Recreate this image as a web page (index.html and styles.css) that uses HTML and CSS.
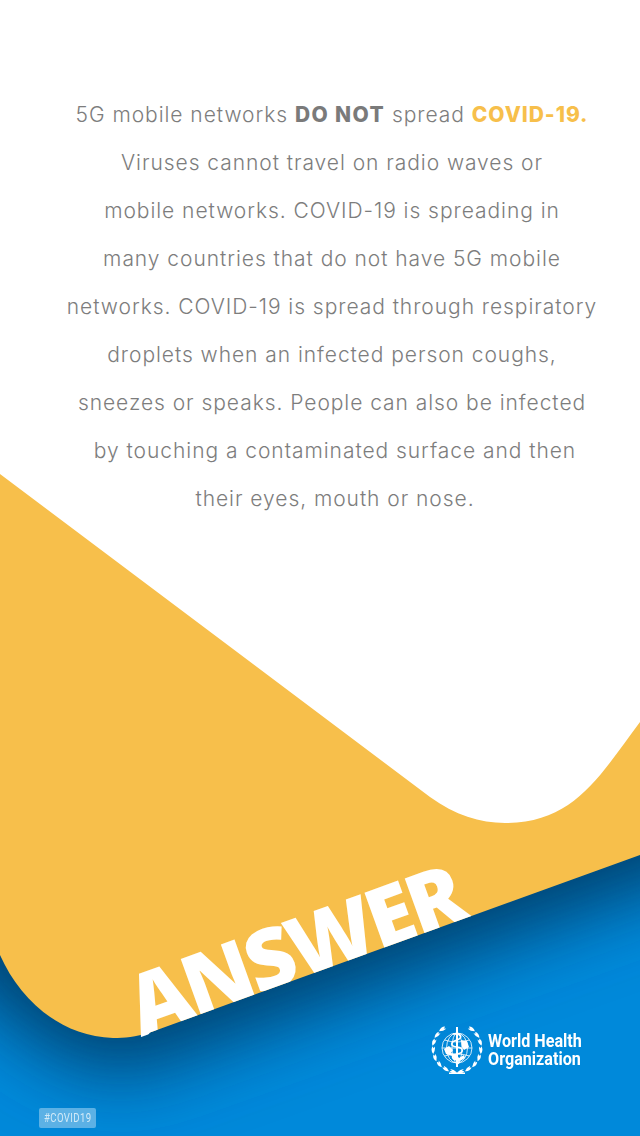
FILE: index.html
```html
<!DOCTYPE html>
<html lang="en">
<head>
<meta charset="utf-8">
<title>5G mobile networks do not spread COVID-19</title>
<link rel="stylesheet" href="styles.css">
</head>
<body>
<main class="page">
  <svg class="backdrop" viewBox="0 0 640 1136" width="640" height="1136" aria-hidden="true">
    <defs>
      <filter id="soft" x="-20%" y="-40%" width="140%" height="180%">
        <feGaussianBlur stdDeviation="38"/>
      </filter>
      <clipPath id="seaClip"><path d="M0 940L120 1025L660 840V1136H0Z"/></clipPath>
      <clipPath id="sunClip"><path d="M100 800H640V855L150 1032.500L130 1060H100Z"/></clipPath>
    </defs>
    <rect class="sky" width="640" height="1136"/>
    <rect class="sea" x="0" y="850" width="640" height="286"/>
    <g clip-path="url(#seaClip)">
      <path class="shade" filter="url(#soft)" d="M-60 960C20 1030 60 1072 130 1074L720 864V700H-60Z"/>
    </g>
    <path class="sun" d="M0 474L430 797C455 815 480 823 505 823C575 823 600 775 640 722V855L150 1032.500C135 1037 125 1038 113 1038C60 1036 20 1000 0 955Z"/>
    <g clip-path="url(#sunClip)">
      <text class="answer" transform="translate(141 1037) rotate(-19.8)">ANSWER</text>
    </g>
  </svg>

  <section class="message">
    <p class="line">5G mobile networks <b class="strong">DO NOT</b> spread <b class="accent">COVID-19.</b></p>
    <p class="line">Viruses cannot travel on radio waves or</p>
    <p class="line">mobile networks. COVID-19 is spreading in</p>
    <p class="line">many countries that do not have 5G mobile</p>
    <p class="line">networks. COVID-19 is spread through respiratory</p>
    <p class="line">droplets when an infected person coughs,</p>
    <p class="line">sneezes or speaks. People can also be infected</p>
    <p class="line line-shift">by touching a contaminated surface and then</p>
    <p class="line line-shift">their eyes, mouth or nose.</p>
  </section>

  <footer class="foot">
    <div class="who">
      <svg class="emblem" viewBox="0 0 52 50" width="52" height="50" aria-hidden="true">
        <defs>
          <g id="leaves">
            <path id="leafpair" d="M26 47.500q-3.800-2.800-7.500-1.200q3.200 3.200 7.500 1.200zM26 47.500q-3.200-3.200-6.800-3.400q2.600 3.800 6.800 3.400z"/>
            <use href="#leafpair" transform="rotate(19 26 23)"/>
            <use href="#leafpair" transform="rotate(38 26 23)"/>
            <use href="#leafpair" transform="rotate(57 26 23)"/>
            <use href="#leafpair" transform="rotate(76 26 23)"/>
            <use href="#leafpair" transform="rotate(95 26 23)"/>
            <use href="#leafpair" transform="rotate(114 26 23)"/>
            <use href="#leafpair" transform="rotate(133 26 23)"/>
          </g>
        </defs>
        <g class="globe">
          <circle cx="26" cy="23" r="15"/>
          <ellipse cx="26" cy="23" rx="10.500" ry="15"/>
          <ellipse cx="26" cy="23" rx="5" ry="15"/>
          <path d="M11 23H41M13.500 15Q26 19 38.500 15M13.500 31Q26 27 38.500 31"/>
        </g>
        <path class="land" d="M13 24L18 21L22 25L20 28L25 29L28 33L33 30L34 33L29 36L24 35L21 31L15 29Z"/>
        <path class="land" d="M30 15L36 16L38 22L33 25L31 22Z"/>
        <path class="staff" d="M25 2H27V42H25Z"/>
        <path class="snake" d="M22 9C31 8 32 13 26 15C19 17 19 21 26 22C33 23 33 28 26 29C20 30 20 34 26 35C29 36 29 38 26 39"/>
        <use class="leaf" href="#leaves"/>
        <use class="leaf" href="#leaves" transform="translate(52 0) scale(-1 1)"/>
        <path class="leaf" d="M18 47.500H34V49H18Z"/>
      </svg>
      <p class="who-name">World Health<br>Organization</p>
    </div>
    <span class="tag"><span class="tag-text">#COVID19</span></span>
  </footer>
</main>
</body>
</html>
```
FILE: styles.css
```css
* { box-sizing: border-box; }
html, body { margin: 0; padding: 0; }
body { width: 640px; height: 1136px; overflow: hidden; background: #fff; }

.page {
  position: relative;
  width: 640px;
  height: 1136px;
  display: flex;
  flex-direction: column;
  justify-content: space-between;
  overflow: hidden;
}

.backdrop { position: absolute; inset: 0; display: block; }
.sky { fill: #fff; }
.sea { fill: #0089da; }
.shade { fill: #004270; }
.sun { fill: #f7bf4b; }
.answer {
  font-family: "Open Sans", "Liberation Sans", sans-serif;
  font-weight: 800;
  font-size: 84px;
  letter-spacing: -3.500px;
  fill: #fff;
}

.message {
  position: relative;
  padding: 91px 0 0 24px;
  font-family: Inter, "Liberation Sans", sans-serif;
  font-weight: 300;
  font-size: 21px;
  letter-spacing: .95px;
  color: #7d7d7d;
  text-align: center;
}
.line { margin: 0; height: 48px; line-height: 48px; white-space: nowrap; }
.line-shift { padding-left: 6px; }
.strong { font-weight: 800; letter-spacing: 1.400px; color: #7a7a7a; }
.accent { font-weight: 800; letter-spacing: .950px; color: #f7bf4b; }

.foot {
  position: relative;
  display: flex;
  flex-direction: column;
  padding: 0 0 8px 39px;
}
.who {
  display: flex;
  align-items: center;
  gap: 5px;
  align-self: flex-end;
  margin: 0 57px 33px 0;
}
.emblem { display: block; }
.globe { fill: none; stroke: #fff; stroke-width: .8; }
.land { fill: #fff; }
.staff { fill: #fff; }
.snake { fill: none; stroke: #fff; stroke-width: 1.600; }
.leaf { fill: #fff; }
.who-name {
  width: 95px;
  margin: 0;
  font-family: Roboto, "Liberation Sans", sans-serif;
  font-weight: 700;
  font-size: 19px;
  line-height: 18px;
  white-space: nowrap;
  color: #fff;
  transform: scaleX(.85);
  transform-origin: left center;
}
.tag {
  align-self: flex-start;
  display: flex;
  justify-content: center;
  width: 57px;
  height: 20px;
  line-height: 20px;
  background: #5cb1e5;
  border-radius: 2px;
  font-family: Roboto, "Liberation Sans", sans-serif;
  font-size: 12px;
  letter-spacing: .5px;
  color: #d2eaf8;
}
.tag-text { display: inline-block; transform: scaleX(.8); }
```
